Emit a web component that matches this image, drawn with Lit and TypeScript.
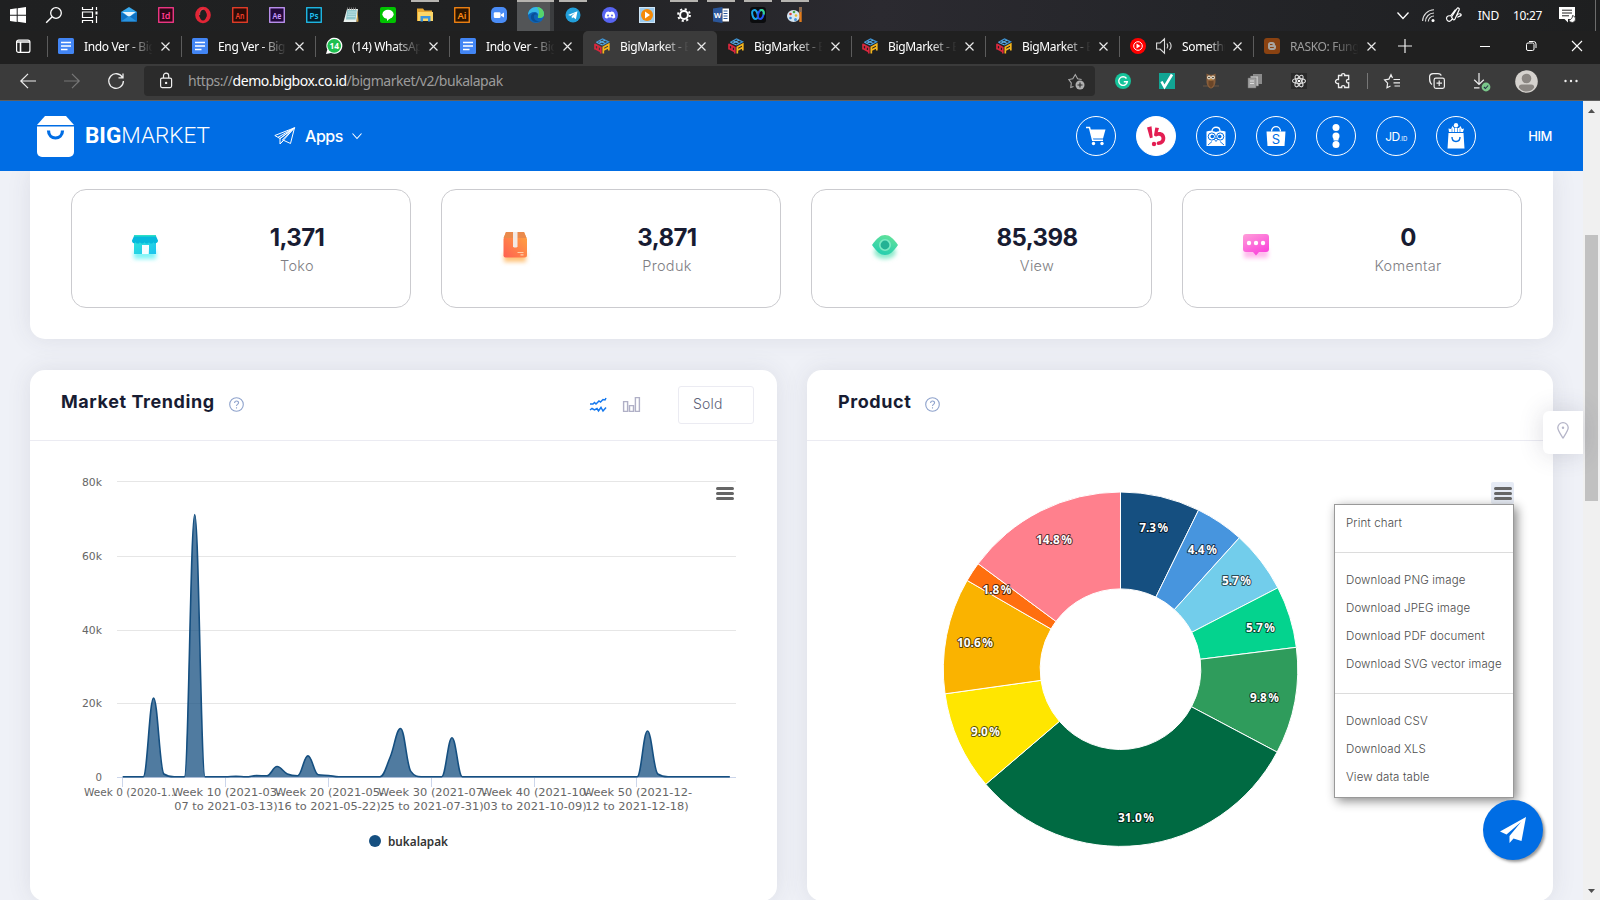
import { LitElement, html, svg, css, nothing } from "lit";
import { customElement } from "lit/decorators.js";
import { classMap } from "lit/directives/class-map.js";

const icon = (body: unknown, w = 16, h = w, vb = `0 0 ${w} ${h}`) =>
  html`<svg class="ic" width=${w} height=${h} viewBox=${vb} fill="none">${body}</svg>`;

const adobe = (t: string, fg: string, bg: string) =>
  icon(svg`<rect x=".75" y=".75" width="14.5" height="14.5" fill=${bg} stroke=${fg} stroke-width="1.3"/>
  <text x="8" y="11.6" text-anchor="middle" font-family="Noto Sans, sans-serif" font-size="9.5" textLength="9" lengthAdjust="spacingAndGlyphs" font-weight="600" fill=${fg}>${t}</text>`);

const docs = () => icon(svg`<rect width="16" height="16" rx="1.5" fill="#4285f4"/><path d="M3 4.5h10M3 8h10M3 11.5h6.5" stroke="#fff" stroke-width="1.7"/>`);
const bigbox = () => icon(svg`
  <path d="M2.500 4.200 8.500 1l6 2.800-6 3.200" stroke="#3f93d2" stroke-width="1.300"/><path d="M5.300 2.700l6 2.800M5 5.300l6-3.100M2.500 4.200l6 2.800" stroke="#5aaee6" stroke-width="1.200"/>
  <path d="M1 5.800v5.700M1 6.300l5.800 3.200v6M1 10.500l5.500 3M4 8v4.500" stroke="#d8273d" stroke-width="1.700"/>
  <path d="M9.300 15.500V9.300l5.500-3v6.200M9.300 12.300l5.200-2.800" stroke="#f5b51c" stroke-width="1.700"/>`);

const taskIcons: { g: unknown; line?: boolean; active?: boolean }[] = [
  { g: icon(svg`<path d="M0 5h16v9.500H0z" fill="#0f72c4"/><path d="M0 5 8 0l8 5-8 5z" fill="#38a9ee"/><path d="M1.500 5h13L8 10z" fill="#e8f4fc"/><path d="M0 14.500 8 9l8 5.500z" fill="#2a94e0"/>`) },
  { g: adobe("Id", "#ff3a8d", "#2a0716") },
  { g: icon(svg`<ellipse cx="8" cy="8" rx="5.800" ry="6.300" stroke="#e22536" stroke-width="4" /><ellipse cx="8" cy="8" rx="3.400" ry="5.600" fill="#202020"/><path d="M4.600 8c0-4 2-6 4-6" stroke="#ff7a80" stroke-width=".6"/>`) },
  { g: adobe("An", "#f2402a", "#2b0b07") },
  { g: adobe("Ae", "#c79bff", "#22083a") },
  { g: adobe("Ps", "#20c4f4", "#041e2b") },
  { g: icon(svg`<path d="M4 2h11l-1.500 13H.5z" fill="#e9f1ee"/><path d="M4.200 3h9.500l-1.100 9.500H3z" fill="#8fc7cc"/><path d="M5 5h8M4.700 7.200h8M4.400 9.400h8" stroke="#c9e8ea" stroke-width=".8"/><path d="M4 1.500h10" stroke="#777" stroke-width="2" stroke-dasharray="1 1"/><path d="m14.500 3 1 11.500-2 .5z" fill="#c9a04a"/>`) },
  { g: icon(svg`<rect width="16" height="16" rx="2" fill="#00c300"/><ellipse cx="8" cy="7.300" rx="5.600" ry="4.600" fill="#fff"/><path d="M7 11v3l4-3.500z" fill="#fff"/>`) },
  { g: icon(svg`<path d="M0 1.500h6l1.500 2H15V14H0z" fill="#e8a832"/><path d="M1 5h15v9H1z" fill="#fcd667"/><path d="M3.500 14.500V9h10v5.500H11v-3H6v3z" fill="#3b95dd"/>`), line: true },
  { g: adobe("Ai", "#ff8a12", "#2c1500") },
  { g: icon(svg`<rect width="16" height="16" rx="5" fill="#4a8cf6"/><rect x="2.800" y="5.300" width="6.700" height="5.600" rx="1.200" fill="#fff"/><path d="m10 7.400 3-1.800v5l-3-1.800z" fill="#fff"/>`) },
  { g: icon(svg`<circle cx="8" cy="8" r="8" fill="#0d66b8"/><path d="M0 8C0 3 4 0 8 0c5 0 8 3.500 8 7 0 3-2.500 4-4.500 4-1.500 0-2-.7-1.500-1.500C11 7 9 5 6.500 5 3 5 1 7 0 8z" fill="#37b8e6"/><path d="M9 .1c4.500.3 7 3.500 7 6.900 0 3-2.500 4-4.500 4-1.500 0-2-.7-1.500-1.500C12 6 11 3 9 .1z" fill="#57d46a"/><path d="M6.300 8c-1.500 3 1 7 6 6C7 17 2 13 3 9c.5-2 2-3 3.500-3 2 0 2.600 1 2.500 1.600-1 0-2-.6-2.700.4z" fill="#0a4f96"/>`), line: true, active: true },
  { g: icon(svg`<circle cx="8" cy="8" r="7.500" fill="#229fda"/><path d="m3 8 9.500-3.800-1.600 8-2.700-2-1.300 1.400-.3-2.400 3.600-3.400-4.600 3z" fill="#fff"/>`), line: true },
  { g: icon(svg`<circle cx="8" cy="8" r="8" fill="#5865f2"/><path d="M4 5.500c1-.8 2-1 2.700-1l.4.600h1.800l.4-.6c.8 0 1.700.2 2.700 1 .8 1.500 1.300 3 1.200 5-.8.600-1.700 1-2.500 1l-.6-1H5.900l-.6 1c-.8 0-1.700-.4-2.500-1-.1-2 .4-3.500 1.200-5z" fill="#fff"/><circle cx="6" cy="8.500" r="1" fill="#5865f2"/><circle cx="10" cy="8.500" r="1" fill="#5865f2"/>`) },
  { g: icon(svg`<rect x=".5" y=".5" width="15" height="15" fill="#9ccbee" stroke="#cfe6f7"/><circle cx="8" cy="8" r="6" fill="#f58a07"/><path d="m6 4.500 5 3.500-5 3.500z" fill="#fff"/>`) },
  { g: icon(svg`<circle cx="8" cy="8" r="3.900" stroke="#fff" stroke-width="2"/><circle cx="8" cy="8" r="5.900" stroke="#fff" stroke-width="2" stroke-dasharray="2.100 2.530"/>`), line: true },
  { g: icon(svg`<path d="M0 1.500 9.500 0v16L0 14.500z" fill="#2b569a"/><path d="M9.500 1.500H16v13H9.500z" fill="#fff"/><path d="M10.500 4h4M10.500 6.500h4M10.500 9h4M10.500 11.500h4" stroke="#2b569a"/><text x="4.700" y="11" text-anchor="middle" font-family="Noto Sans, sans-serif" font-weight="700" font-size="7.500" fill="#fff">W</text>`), line: true },
  { g: icon(svg`<rect width="16" height="16" rx="3" fill="#0b0c0e"/><ellipse cx="5" cy="7.500" rx="2.600" ry="4.500" transform="rotate(-15 5 7.500)" stroke="#1aa7e8" stroke-width="2"/><ellipse cx="10.800" cy="7.500" rx="2.600" ry="4.500" transform="rotate(15 10.800 7.500)" stroke="#2456f0" stroke-width="2"/><path d="M10 3.500c3-1.500 4.500 1 3.600 4" stroke="#35d88a" stroke-width="2"/>`), line: true },
  { g: icon(svg`<ellipse cx="6.500" cy="9" rx="6.500" ry="6" fill="#d7e7f3"/><circle cx="3.500" cy="7" r="1.300" fill="#d9453a"/><circle cx="7" cy="5" r="1.300" fill="#4da84a"/><circle cx="3.500" cy="11" r="1.300" fill="#3c86d8"/><circle cx="8.500" cy="12.500" r="1.500" fill="#4b95d6"/><circle cx="9" cy="8.500" r="1.300" fill="#e9bd2e"/><path d="M13.500 0v5" stroke="#8a6a52" stroke-width="3"/><path d="M13.500 5v10" stroke="#e27c1c" stroke-width="2.400"/>`), line: true },
];

interface Tab { title: string; icon: unknown; active?: boolean; dim?: boolean; sound?: boolean; noSep?: boolean }
const tabs: Tab[] = [
  { title: "Indo Ver - Big", icon: docs() },
  { title: "Eng Ver - Big", icon: docs() },
  { title: "(14) WhatsAp", icon: icon(svg`<path d="M0 16 1.300 11.500A8 8 0 1 1 5 15z" fill="#fff"/><circle cx="8.200" cy="7.800" r="6.900" fill="#1fbf4f"/><text x="8.200" y="11.300" text-anchor="middle" font-family="Noto Sans, sans-serif" font-weight="700" font-size="9" textLength="9.500" lengthAdjust="spacingAndGlyphs" fill="#fff">14</text>`) },
  { title: "Indo Ver - Big", icon: docs() },
  { title: "BigMarket - B", icon: bigbox(), active: true, noSep: true },
  { title: "BigMarket - B", icon: bigbox(), noSep: true },
  { title: "BigMarket - B", icon: bigbox() },
  { title: "BigMarket - B", icon: bigbox() },
  { title: "Somethi", sound: true, icon: icon(svg`<circle cx="8" cy="8" r="8" fill="#f00"/><circle cx="8" cy="8" r="4.300" stroke="#fff" stroke-width="1"/><path d="m6.500 5.500 4 2.500-4 2.500z" fill="#fff"/>`) },
  { title: "RASKO: Fung", dim: true, icon: icon(svg`<rect width="16" height="16" rx="3" fill="#8a4211"/><path d="M4 6.500C4 5 5 4 6.500 4h2C10 4 11 5 11 6.500c0 .6.200 1 1 1v2c0 1.500-1 2.500-2.500 2.500h-3C5 12 4 11 4 9.500z" fill="#a8a39e"/><path d="M6 6.500h2.500M6 9.500h3.800" stroke="#8a4211" stroke-width="1.100"/>`) },
];

const stats = [
  { value: "1,371", label: "Toko", icon: icon(svg`
    <g filter="url(#b1)"><rect x="5" y="20" width="22" height="8" fill="#7ff4f6"/></g>
    <defs><filter id="b1" x="-50%" y="-100%" width="200%" height="300%"><feGaussianBlur stdDeviation="2"/></filter><linearGradient id="g1" x2="1" y2="1"><stop stop-color="#31e8d8"/><stop offset="1" stop-color="#1cc2f0"/></linearGradient></defs>
    <path d="M5 6h22v17h-7v-9h-7v9H5z" fill="url(#g1)"/><path d="M13 14h6.500v9H13z" fill="#f5fcff"/>
    <path d="M5.500 4h21l2.500 5.500c0 3.400-4 3.400-4.500 1.500-.6 2-4 2-4.500 0-.6 2-4 2-4.500 0-.6 2-4 2-4.500 0-.6 2-4 2-4.500 0-.5 1.900-3.500 1.900-3.500-1.500z" fill="#06b9dc"/><path d="M5.500 4h21l.7 1.500H4.800z" fill="#2bdfc7"/>`, 32, 36) },
  { value: "3,871", label: "Produk", icon: icon(svg`
    <defs><filter id="b2" x="-50%" y="-100%" width="200%" height="300%"><feGaussianBlur stdDeviation="2"/></filter><linearGradient id="g2" x1="1" x2="0" y2="1"><stop stop-color="#ffa840"/><stop offset="1" stop-color="#ff5f52"/></linearGradient></defs>
    <rect x="5" y="22" width="22" height="9" fill="#ffc37a" filter="url(#b2)"/>
    <path d="M4.500 8 7 1h18l3 7v16a2.500 2.500 0 0 1-2.500 2.500h-19a2 2 0 0 1-2-2z" fill="url(#g2)"/><path d="M7 1h18l2.500 6h-23z" fill="#ea8a4c"/>
    <path d="M14 1h4.500v14.500l-1 1h-2.500l-1-1z" fill="#f3e9e4"/><path d="M18.500 21.500h6M21.500 23.800h3" stroke="#ffd0a8" stroke-width="1.200"/>`, 32, 36) },
  { value: "85,398", label: "View", icon: icon(svg`
    <defs><filter id="b3" x="-50%" y="-100%" width="200%" height="300%"><feGaussianBlur stdDeviation="2"/></filter><linearGradient id="g3" x1=".7" x2=".3" y2="1"><stop stop-color="#63e29a"/><stop offset="1" stop-color="#22cdb0"/></linearGradient></defs>
    <ellipse cx="16" cy="21" rx="11" ry="7" fill="#8ceacb" filter="url(#b3)"/>
    <path d="M3 14C8 7 11.500 4 16 4s8 3 13 10c-5 7-8.500 10-13 10S8 21 3 14z" fill="url(#g3)"/><circle cx="16" cy="14" r="5.200" fill="#24b294" stroke="#7debc4" stroke-width="1.600"/>`, 32, 36) },
  { value: "0", label: "Komentar", icon: icon(svg`
    <defs><filter id="b4" x="-50%" y="-100%" width="200%" height="300%"><feGaussianBlur stdDeviation="2"/></filter><linearGradient id="g4" x2=".6" y2="1"><stop stop-color="#ff9fd8"/><stop offset="1" stop-color="#fb45dc"/></linearGradient></defs>
    <rect x="4" y="18" width="24" height="9" fill="#ffb9ec" filter="url(#b4)"/>
    <path d="M6 3h20a3 3 0 0 1 3 3v12a3 3 0 0 1-3 3h-7l-3 3.500L13 21H6a3 3 0 0 1-3-3V6a3 3 0 0 1 3-3z" fill="url(#g4)"/><circle cx="9" cy="12" r="2.200" fill="#fff"/><circle cx="16" cy="12" r="2.200" fill="#fff"/><circle cx="23" cy="12" r="2.200" fill="#fff"/>`, 32, 36) },
];

/* Weekly sales, one value per week. */
const weekly: number[] = Array.from({ length: 60 }, () => 0.15);
Object.entries({ 3: 21.4, 4: 0.9, 7: 71, 11: 0.25, 13: 0.45, 14: 0.4, 15: 2.9, 16: 0.9, 17: 0.4, 18: 5.8, 19: 0.7, 20: 0.5, 26: 5.5, 27: 13.2, 28: 1.6, 32: 10.7, 51: 12.5, 52: 0.9 })
  .forEach(([k, v]) => (weekly[+k] = v));
const PX = (i: number) => 122.7 + i * 10.29;
const PY = (v: number) => 777.3 - v * 3.7;

const splinePath = () => {
  const p = weekly.map((v, i) => ({ x: PX(i), y: PY(v), rx: 0, ry: 0 }));
  let d = `M${p[0].x} ${p[0].y}`;
  for (let i = 1; i < p.length; i++) {
    const last = p[i - 1], pt = p[i], next = p[i + 1];
    let lx = pt.x, ly = pt.y;
    if (next) {
      lx = (1.5 * pt.x + last.x) / 2.5;
      ly = (1.5 * pt.y + last.y) / 2.5;
      let rx = (1.5 * pt.x + next.x) / 2.5;
      let ry = (1.5 * pt.y + next.y) / 2.5;
      const c = rx !== lx ? ((ry - ly) * (rx - pt.x)) / (rx - lx) + pt.y - ry : 0;
      ly += c;
      ry += c;
      if (ly > last.y && ly > pt.y) { ly = Math.max(last.y, pt.y); ry = 2 * pt.y - ly; }
      else if (ly < last.y && ly < pt.y) { ly = Math.min(last.y, pt.y); ry = 2 * pt.y - ly; }
      if (ry > next.y && ry > pt.y) { ry = Math.max(next.y, pt.y); ly = 2 * pt.y - ry; }
      else if (ry < next.y && ry < pt.y) { ry = Math.min(next.y, pt.y); ly = 2 * pt.y - ry; }
      pt.rx = rx;
      pt.ry = ry;
    }
    const cx = i === 1 ? last.x : last.rx, cy = i === 1 ? last.y : last.ry;
    d += `C${cx} ${cy} ${lx} ${ly} ${pt.x} ${pt.y}`;
  }
  return d;
};

const xLabels = [
  { x: 225.500, a: "Week 10 (2021-03-", b: "07 to 2021-03-13)" },
  { x: 328.500, a: "Week 20 (2021-05-", b: "16 to 2021-05-22)" },
  { x: 431.500, a: "Week 30 (2021-07-", b: "25 to 2021-07-31)" },
  { x: 534.500, a: "Week 40 (2021-10-", b: "03 to 2021-10-09)" },
  { x: 636.500, a: "Week 50 (2021-12-", b: "12 to 2021-12-18)" },
];

const slices = [
  { to: 7.26, c: "#154f80", t: "7.3 %", x: 1153.7, y: 528.3 },
  { to: 11.7, c: "#4795de", t: "4.4 %", x: 1202.3, y: 550.3 },
  { to: 17.4, c: "#72cdeb", t: "5.7 %", x: 1236.5, y: 581.2 },
  { to: 23.03, c: "#04d38e", t: "5.7 %", x: 1260.5, y: 628.3 },
  { to: 32.75, c: "#2f9c5c", t: "9.8 %", x: 1264.5, y: 698.3 },
  { to: 63.75, c: "#006a42", t: "31.0 %", x: 1136, y: 818.3 },
  { to: 72.78, c: "#ffe600", t: "9.0 %", x: 985.5, y: 732.3 },
  { to: 83.35, c: "#fab300", t: "10.6 %", x: 975, y: 643.3 },
  { to: 85.15, c: "#ff6f0f", t: "1.8 %", x: 997, y: 590.3 },
  { to: 100, c: "#ff808d", t: "14.8 %", x: 1054, y: 540.3 },
];
const CX = 1120.5, CY = 669.2, RO = 177.200, RI = 80.300;
const polar = (r: number, f: number) => `${CX + r * Math.sin((f * Math.PI) / 50)} ${CY - r * Math.cos((f * Math.PI) / 50)}`;
const slicePath = (a: number, b: number) =>
  `M${polar(RO, a)}A${RO} ${RO} 0 0 1 ${polar(RO, b - 0.001)}L${polar(RI, b - 0.001)}A${RI} ${RI} 0 0 0 ${polar(RI, a)}Z`;

const menuGroups = [
  ["Print chart"],
  ["Download PNG image", "Download JPEG image", "Download PDF document", "Download SVG vector image"],
  ["Download CSV", "Download XLS", "View data table"],
];

const W = "#fff";
const markets = [
  { g: icon(svg`<path d="M4 3.500h15.500l-2.500 9H6.500z" fill=${W}/><path d="M0 1.500h3.500l3.200 12.700H17" stroke=${W} stroke-width="1.500"/><circle cx="7.500" cy="17.500" r="1.700" fill=${W}/><circle cx="16" cy="17.500" r="1.700" fill=${W}/>`, 20) },
  { g: icon(svg`<path d="M1 1.500 5.500.2l1.200 11.300-2.700.8z" fill="#e31e52"/><circle cx="8" cy="18" r="2.200" fill="#e31e52"/><path d="M9.300 1.500 13 2l-1.300 4.200c4-.8 7.300 1.300 7.600 5.600.2 4.200-2.800 7.200-6.800 7.200-1.300 0-2-1-1.800-2 .2-1.200 1-1.600 2.200-1.700 1.700-.2 2.700-1.300 2.600-3-.1-2.200-2-3.200-4-2.200-1.200.6-3.200.5-3.500-1.100z" fill="#e31e52"/>`, 20), on: true },
  { g: icon(svg`<path d="M6 5c0-5 8-5 8 0" stroke=${W} stroke-width="1.300"/><path d="M.5 5.500c4-1.500 6-.5 9.500.5 3.500-1 5.500-2 9.500-.5V20H.5z" fill=${W}/><circle cx="5.800" cy="10.500" r="3.600" stroke="#006de4"/><circle cx="14.200" cy="10.500" r="3.600" stroke="#006de4"/><circle cx="6.300" cy="10.500" r="1.800" fill="#006de4"/><circle cx="13.700" cy="10.500" r="1.800" fill="#006de4"/><path d="m8.500 13.500 1.500-1.500 1.500 1.500-1.500 2zM2 19l4-3.500M18 19l-4-3.500" stroke="#006de4" stroke-width=".9"/>`, 20, 21) },
  { g: icon(svg`<path d="M5.500 5.500c0-6.500 9-6.500 9 0" stroke=${W} stroke-width="1.300"/><path d="M.5 5.500h19L18.500 20h-17z" fill=${W}/><text x="10" y="17.500" text-anchor="middle" font-family="Inter, sans-serif" font-size="13" fill="#006de4">S</text>`, 20, 21) },
  { g: icon(svg`<circle cx="5" cy="3.500" r="3.500" fill=${W}/><circle cx="5" cy="12" r="3.500" fill=${W}/><circle cx="5" cy="20.500" r="3.500" fill=${W}/><path d="M2.500 15.500h5" stroke=${W} stroke-width="2"/>`, 10, 24) },
  { g: html`<span class="jd">JD<small>.ID</small></span>` },
  { g: icon(svg`<path d="M2 9 1.500 5.500 4 6l1.500-3 1.500 2h5l1.500-2L15 6l2-.5L16 9z" fill=${W}/><circle cx="9" cy="2.200" r="2.200" fill=${W}/><path d="M1.500 10h15l1 15.500H.500z" fill=${W}/><path d="M5 14c0 6 8 6 8 0" stroke="#006de4" stroke-width="1.400"/><path d="M5 5.500v3.500M7.500 5v4M10.500 5v4M13 5.500v3.500" stroke="#006de4" stroke-width=".6"/>`, 18, 26) },
];

const burger = (x: number) => svg`<path d=${`M${x} 488.500h15M${x} 493.500h15M${x} 498.500h15`} stroke="#666" stroke-width="3" stroke-linecap="round"/>`;
const help = () => icon(svg`<circle cx="7.500" cy="7.500" r="6.800" stroke="#8fa3cc" stroke-width="1.100"/><path d="M5.600 6c0-2.600 4-2.600 4-.2 0 1.600-2.100 1.500-2.100 3.100M7.500 10.300v1.100" stroke="#8fa3cc" stroke-width="1.100"/>`, 15);

@customElement("app-root")
export class AppRoot extends LitElement {
  static styles = css`
    :host { display: flex; flex-direction: column; width: 1600px; height: 900px; overflow: hidden; position: relative;
      font-family: Inter, "Open Sans", sans-serif; color: #181c32; background: #eff1f7; }
    * { box-sizing: border-box; }
    .ic { display: block; flex: none; overflow: visible; }
    .chrome { font-family: "Noto Sans", "Open Sans", sans-serif; color: #fff; flex: none; }
    .taskbar { display: flex; height: 31px; background: linear-gradient(90deg, #1f2021, #202122 30%, #2b2a30 55%, #242529 75%, #1e1f20); }
    .cell { width: 37px; height: 31px; display: flex; align-items: center; justify-content: center; padding-bottom: 1px; }
    .cell.sys { width: 36px; }
    .cell.first { margin-left: 2px; }
    .cell.line { background: linear-gradient(#b6b4b0, #b6b4b0) center top / 28px 2px no-repeat; }
    .cell.active { background: linear-gradient(#b6b4b0, #b6b4b0) left top / 37px 2px no-repeat, linear-gradient(90deg, #535557 0 33px, #3b3d3f 33px); }
    .tray { margin-left: auto; display: flex; align-items: center; font-size: 12px; padding-bottom: 1px; }
    .tray span { letter-spacing: -.35px; }
    .tray .t1 { margin: 0 14px 0 16px; letter-spacing: -.2px; } .t2 { margin-right: 17px; }
    .tray .pen { margin-left: 11px; } .tray .wifi { margin-left: 13px; }
    .deskline { width: 1px; height: 31px; background: #6c6c6c; margin: 0 4px 0 20px; }
    .tabs { display: flex; height: 33px; background: #202020; align-items: stretch; }
    .side { width: 47px; display: flex; align-items: center; padding: 0 0 3px 16px; }
    .tab { width: 134px; display: flex; align-items: center; padding: 0 0 3px 11px; font-size: 12px; }
    .tab::before { content: ""; width: 1px; height: 21px; background: #5c5c5c; margin-left: -11px; margin-right: 10px; }
    .tab.nosep::before { background: none; }
    .tab.active { background: #3b3b3b; border-radius: 5px 5px 0 0; }
    .title { margin-left: 10px; width: 70px; overflow: hidden; white-space: nowrap; letter-spacing: -.35px;
      -webkit-mask-image: linear-gradient(90deg, #000 60%, transparent 98%); mask-image: linear-gradient(90deg, #000 60%, transparent 98%); }
    .sound .title { width: 44px; margin-left: 10px; }
    .sound .spk { margin-left: 10px; }
    .dim .title { color: #9d9d9d; }
    .x { margin-left: 7px; }
    .side.plus { margin: 0; padding-left: 11px; }
    .wins { margin-left: auto; display: flex; gap: 36px; padding: 0 18px 3px 0; align-items: center; }
    .tools { display: flex; height: 37px; background: #3b3b3b; border-bottom: 1px solid #5e5e5e; align-items: flex-start; padding: 2px 0 0 20px; }
    .nav { display: flex; gap: 28px; height: 30px; align-items: center; width: 124px; }
    .addr { width: 951px; height: 30px; background: #2b2b2b; border-radius: 4px; display: flex; align-items: center; padding: 0 11px 0 14px; }
    .url { margin-left: 14px; font-size: 14px; color: #9b9b9b; letter-spacing: -.46px; margin-top: -1px; }
    .url b { font-weight: 400; color: #fff; }
    .addr .star { margin-left: auto; }
    .exts { display: flex; height: 30px; align-items: center; padding-left: 6px; }
    .ext { width: 44px; display: flex; justify-content: center; flex: none; }
    .ext.wide { width: 44.700px; }
    .sep { width: 1px; height: 16px; background: #777; margin: 0 2px; }
    .view { flex: 1; display: flex; min-height: 0; position: relative; }
    .page { width: 1583px; display: flex; flex-direction: column; overflow: hidden; }
    .header { height: 70px; flex: none; background: #006de4; color: #fff; display: flex; align-items: center; padding: 0 31px 0 37px; z-index: 2; }
    .brand { font: 700 22.500px Roboto, sans-serif; margin-left: 11px; width: 127px; margin-top: -2px; letter-spacing: 0; white-space: nowrap; }
    .brand span { font-weight: 300; }
    .apps { display: flex; align-items: center; margin-left: 62px; font-size: 16px; font-weight: 500; letter-spacing: -.45px; gap: 10px; }
    .apps .ic:last-child { margin-left: -1px; }
    .markets { margin-left: auto; display: flex; gap: 20px; }
    .mk { width: 40px; height: 40px; border: 1px solid #fff; border-radius: 50%; display: flex; align-items: center; justify-content: center; }
    .mk.on { background: #fff; }
    .jd { font-size: 12px; font-weight: 400; letter-spacing: -.6px; } .jd small { font-size: 6px; letter-spacing: 0; }
    .him { font-size: 13px; font-weight: 500; margin-left: 52px; letter-spacing: -.45px; }
    .content { padding: 0 30px; display: flex; flex-direction: column; gap: 31px; }
    .card { background: #fff; box-shadow: 0 0 25px rgba(60, 60, 80, .1); }
    .summary { height: 168px; border-radius: 0 0 15px 15px; padding: 18px 0 0 41px; display: grid; grid-template-columns: 340px 340px 341px 340px; gap: 30px; }
    .stat { height: 119px; border: 1px solid #cbcbcf; border-radius: 15px; display: flex; }
    .pic { width: 146px; display: flex; align-items: center; justify-content: center; }
    .num { width: 158px; text-align: center; padding-top: 33px; }
    .num b { display: block; font-size: 24px; line-height: 29px; font-weight: 700; letter-spacing: -.6px; }
    .num i { display: block; font-style: normal; font-size: 14.500px; line-height: 20px; margin-top: 4px; color: #7e7e83; font-weight: 300; letter-spacing: .3px; }
    .row { display: flex; gap: 30px; }
    .chart { width: 747px; height: 531px; border-radius: 15px; flex: none; }
    .chart:last-child { width: 746px; }
    .head { height: 71px; border-bottom: 1px solid #ebebf2; display: flex; align-items: center; padding: 0 23px 0 31px; }
    .head h2 { margin: -7px 14px 0 0; font-size: 18px; font-weight: 650; letter-spacing: .57px; }
    .head h2 + .ic { margin-top: -2px; }
    .head .trend { margin-left: auto; margin-top: -1px; } .head .bars { margin-left: 17px; margin-top: -1px; }
    .sel { margin-left: 38px; width: 76px; height: 38px; border: 1px solid #ebebf2; border-radius: 3px; font-size: 14px; font-weight: 300; color: #5e6278; padding-left: 14px; line-height: 33px; letter-spacing: .2px; }
    .plot { display: block; }
    .sb { width: 17px; background: #f0f0f0; display: flex; flex-direction: column; align-items: center; justify-content: space-between; padding: 8px 0 7px; position: relative; }
    .thumb { position: absolute; left: 2px; top: 134px; width: 13px; height: 266px; background: #c1c1c1; }
    .pin { position: absolute; right: 17px; top: 310px; width: 40px; height: 43px; background: #fff; border-radius: 6px 0 0 6px; box-shadow: 0 0 25px rgba(60, 60, 90, .18); display: flex; align-items: center; justify-content: center; z-index: 2; padding-bottom: 4px; }
    .menu { position: absolute; left: 1334px; top: 403px; width: 180px; height: 294px; background: #fff; border: 1px solid #999; box-shadow: 3px 3px 10px #888; font-size: 11.500px; font-weight: 300; color: #4c4c4c; padding: 5px 0; z-index: 1; }
    .item { height: 28px; line-height: 26px; padding-left: 11px; white-space: nowrap; letter-spacing: .11px; }
    .menu hr { border: 0; height: 1px; background: #dcdcdc; margin: 14px 0; }
    .fab { position: absolute; left: 1483px; top: 699px; width: 60px; height: 60px; border-radius: 50%; background: #006de4; box-shadow: 2px 2px 3px #999; display: flex; align-items: center; justify-content: center; z-index: 3; }
  `;

  private close(c = "#e8e8e8") {
    return html`<span class="x">${icon(svg`<path d="m.5.5 8 8m0-8-8 8" stroke=${c} stroke-width="1.200"/>`, 9)}</span>`;
  }

  private taskbar() {
    return html`<div class="taskbar">
      <div class="cell sys">${icon(svg`<path d="M0 2.200 6.700 1.300v6.400H0zM7.700 1.200 16 0v7.700H7.700zM0 8.700h6.700v6.200L0 14zM7.700 8.700H16V16l-8.300-1.200z" fill="#fff"/>`)}</div>
      <div class="cell sys">${icon(svg`<circle cx="10" cy="6" r="5.300" stroke="#fff" stroke-width="1.300"/><path d="m6.200 9.800-6 6" stroke="#fff" stroke-width="1.400"/>`)}</div>
      <div class="cell sys">${icon(svg`<path d="M.5 0v2.500h10V0M.5 16v-2.500h10V16M.5 5h10v5.500H.5zM14.500 0v3M14.500 9v7" stroke="#fff" stroke-width="1.200"/><path d="M13.500 4.500h2v3h-2z" fill="#fff"/>`)}</div>
      ${taskIcons.map((t, i) => html`<div class=${classMap({ cell: true, first: i === 0, line: !!t.line, active: !!t.active })}>${t.g}</div>`)}
      <div class="tray">
        ${icon(svg`<path d="m.5.5 5.500 6 5.500-6" stroke="#fff" stroke-width="1.300"/>`, 12, 7)}
        <span class="wifi">${icon(svg`<path d="M.6 12A11.500 11.500 0 0 1 12 .8M3.500 12.500A8.500 8.500 0 0 1 12 4M6.300 12.500A5.700 5.700 0 0 1 12 7" stroke="#ddd" stroke-width="1.100"/><circle cx="11" cy="11.500" r="1.500" fill="#fff"/>`, 13)}</span>
        <span class="pen">${icon(svg`<path d="M5.500 10 11 1.500c.8-1.200 2.800-.2 2.200 1.200L9 12c-.5 1-1.500 1-2 .3zM9.500 2.500l-5 6.500M5 9c-3.500-1-5.500 1.500-4 4 1 1.700 3.500 2.500 5-1M11 8.500c2-3 5-1.500 4 0-1 1.200-2.500.5-3.500 2" stroke="#fff" stroke-width="1.200"/>`)}</span>
        <span class="t1">IND</span><span class="t2">10:27</span>
        ${icon(svg`<path d="M0 0h16v12H9v3.500L5.500 12H0z" fill="#fff"/><path d="M3 3.200h10M3 6h10M3 8.800h7" stroke="#222"/><path d="M13.500 8.500a3.500 3.500 0 1 1-3.800 4.500 4 4 0 0 0 3.800-4.500z" fill="#fff" stroke="#222" stroke-width=".8"/>`)}
        <div class="deskline"></div>
      </div>
    </div>`;
  }

  private tabbar() {
    return html`<div class="tabs">
      <div class="side">${icon(svg`<rect x=".6" y="1.100" width="13.300" height="12.300" rx="2" stroke="#fff" stroke-width="1.200"/><path d="M.6 3h13.300M4.500 3v10.500" stroke="#fff" stroke-width="1.600"/>`, 15)}</div>
      ${tabs.map((t) => html`<div class=${classMap({ tab: true, active: !!t.active, dim: !!t.dim, sound: !!t.sound, nosep: !!t.noSep })}>
        ${t.icon}${t.sound ? html`<span class="spk">${icon(svg`<path d="M.6 5h3.500L8.500.8v14.400L4.100 11H.6zM11 5.500c1 1.500 1 3.500 0 5M13.500 4c2 2.500 2 5.500 0 8" stroke="#ddd" stroke-width="1.100"/>`)}</span>` : nothing}
        <div class="title">${t.title}</div>${this.close()}</div>`)}
      <div class="side plus">${icon(svg`<path d="M7 0v14M0 7h14" stroke="#eee" stroke-width="1.200"/>`, 14)}</div>
      <div class="wins">
        ${icon(svg`<path d="M0 5.500h10" stroke="#fff"/>`, 10)}
        ${icon(svg`<rect x=".5" y="2" width="7.500" height="7.500" rx="1.500" stroke="#fff"/><path d="M3 .5h4.500q2.500 0 2.500 2.500V7" stroke="#fff"/>`, 10)}
        ${icon(svg`<path d="m0 0 10 10M10 0 0 10" stroke="#fff" stroke-width="1.100"/>`, 10)}
      </div>
    </div>`;
  }

  private toolbar() {
    const s = "#eee";
    const left = [
      icon(svg`<circle cx="8" cy="8" r="8" fill="#15c39a"/><path d="M11.500 5.500A4.300 4.300 0 1 0 12.300 8.800H8.800" stroke="#fff" stroke-width="1.400"/>`),
      icon(svg`<path d="M0 0h16v16H0z" fill="#12a594"/><path d="m2.500 8.500 3 5.500L13 1.500" stroke="#fff" stroke-width="2.600"/>`),
      icon(svg`<path d="M0 13h16" stroke="#6b5744" stroke-width="1"/><path d="M3.500.5 6 1.700h4L12.500.5v7.500c0 4-2 7-4.500 7.500-2.500-.5-4.500-3.500-4.500-7.500z" fill="#8a5f3b"/><path d="M5.500 8h5v4l-2.500 3-2.500-3z" fill="#6b4628"/><circle cx="6" cy="4.500" r="1.900" fill="#e9dec8"/><circle cx="10" cy="4.500" r="1.900" fill="#e9dec8"/><path d="m7.200 6 .8 1.800.8-1.800z" fill="#e49b27"/><circle cx="6" cy="4.500" r=".8" fill="#222"/><circle cx="10" cy="4.500" r=".8" fill="#222"/>`),
      icon(svg`<path d="M6 1h9v10H6z" fill="#8b8b8b"/><path d="M3.500 3h8v10h-8z" fill="#bdbdbd" stroke="#777" stroke-width=".5"/><path d="M1 5h8v10H1z" fill="#a3a3a3" stroke="#6d6d6d" stroke-width=".5"/><path d="M3 8h4M3 10.500h4" stroke="#ddd"/>`),
      icon(svg`<path d="M0 0h16v16H0z" fill="#2a2a2a"/><ellipse cx="8" cy="8" rx="6.500" ry="2.500" stroke="#ddd" stroke-width="1.100"/><ellipse cx="8" cy="8" rx="6.500" ry="2.500" transform="rotate(60 8 8)" stroke="#ddd" stroke-width="1.100"/><ellipse cx="8" cy="8" rx="6.500" ry="2.500" transform="rotate(120 8 8)" stroke="#ddd" stroke-width="1.100"/><circle cx="8" cy="8" r="1.300" fill="#fff"/>`),
      icon(svg`<path d="M3.500 2.500h3.200c-.8-2.600 3.800-2.600 3 0h4v4c-3-.8-3 4 0 3.200v4.800h-4c.8-2.600-3.800-2.600-3 0H3.500v-4c-4 .8-4-4.800 0-4z" stroke=${s} stroke-width="1.300"/>`),
    ];
    const right = [
      icon(svg`<path d="m6.500 13-3.500 1.800.6-4.600L.6 6.800l4.300-.7L7 1.700l1.500 3.200M9.500 6.500H16M9.500 9.800H16M10.500 13H16" stroke=${s} stroke-width="1.200"/>`),
      icon(svg`<rect x="5.100" y="5.100" width="10.300" height="10.300" rx="1.800" stroke=${s} stroke-width="1.200"/><path d="M10.200 7.500v5.500M7.500 10.200H13M3 11.500C.6 10 .5 8 .6 3.500.7 1.500 2 .8 4 .7h5c2 0 3 .8 3.200 2" stroke=${s} stroke-width="1.200"/>`),
      icon(svg`<path d="M5 0v11.500M.2 6.800 5 11.500l4.800-4.700M0 14.800h5.500" stroke=${s} stroke-width="1.200"/><circle cx="12" cy="14" r="4.400" fill="#7bc88b"/><path d="m9.900 14 1.500 1.500 2.700-3" stroke="#234" stroke-width="1.100"/>`),
      icon(svg`<circle cx="11.500" cy="11.500" r="11.300" fill="#d5d2ce"/><circle cx="11.500" cy="8.500" r="4.800" fill="#8b8783"/><path d="M3.800 17.500c0-2 1-3 3-3h9.400c2 0 3 1 3 3-2 3-5 4-7.700 4s-5.700-1-7.700-4z" fill="#8b8783"/>`, 23),
      icon(svg`<circle cx="2.500" cy="8" r="1.200" fill=${s}/><circle cx="8" cy="8" r="1.200" fill=${s}/><circle cx="13.500" cy="8" r="1.200" fill=${s}/>`),
    ];
    return html`<div class="tools">
      <div class="nav">
        ${icon(svg`<path d="M16 8H.8M8 .8.8 8 8 15.200" stroke=${s} stroke-width="1.200"/>`)}
        ${icon(svg`<path d="M0 8h15.200M8 .8 15.200 8 8 15.200" stroke="#777" stroke-width="1.200"/>`)}
        ${icon(svg`<path d="M14.500 4.500A7.300 7.300 0 1 0 15.400 8M15 .5v4.300h-4.500" stroke=${s} stroke-width="1.300"/>`)}
      </div>
      <div class="addr">
        <span>${icon(svg`<rect x="2.600" y="5.100" width="11" height="9.500" rx="1.500" stroke=${s} stroke-width="1.200"/><path d="M5.500 5V2.700a2.600 2.600 0 0 1 5.200 0V5" stroke=${s} stroke-width="1.200"/><circle cx="8.100" cy="9.900" r="1.200" fill=${s}/>`)}</span>
        <span class="url">https://<b>demo.bigbox.co.id</b>/bigmarket/v2/bukalapak</span>
        <span class="star">${icon(svg`<path d="m5.500 13.500-2.700 1 .5-4.500L.8 6.500l4-.8L7.300 1.500 9.600 5.700l4 .8" stroke="#aaa" stroke-width="1.100"/><circle cx="12" cy="12" r="4.500" fill="#b0b0b0"/><path d="M12 9.500v5M9.500 12h5" stroke="#2b2b2b" stroke-width="1.100"/>`)}</span>
      </div>
      <div class="exts">
        ${left.map((g) => html`<div class="ext">${g}</div>`)}
        <div class="sep"></div>
        ${right.map((g) => html`<div class="ext wide">${g}</div>`)}
      </div>
    </div>`;
  }

  private header() {
    return html`<div class="header">
      ${icon(svg`<path d="M8 0h21l8 9H0z" fill="#fff"/><path d="M0 10.500h37V36a5 5 0 0 1-5 5H5a5 5 0 0 1-5-5z" fill="#fff"/><path d="M11.500 14.500c0 10 14 10 14 0" stroke="#006de4" stroke-width="3.200"/>`, 37, 41)}
      <div class="brand">BIG<span>MARKET</span></div>
      <div class="apps">
        ${icon(svg`<path d="M20.500.8.800 8.500 6 11.500zM20.500.8 6 11.500v5.500zM20.500.8 8.500 12.800l8 3.700zM6 17l3.500-3.500M4 10.300 20 1" stroke="#fff" stroke-width="1"/>`, 21, 18)}
        <span>Apps</span>${icon(svg`<path d="m.5.500 4.500 5 4.500-5" stroke="#fff" stroke-width="1.100"/>`, 10, 6)}
      </div>
      <div class="markets">${markets.map((m) => html`<div class=${classMap({ mk: true, on: !!m.on })}>${m.g}</div>`)}</div>
      <div class="him">HIM</div>
    </div>`;
  }

  private trendPlot() {
    const line = splinePath();
    const f = "DejaVu Sans, sans-serif";
    const t = (x: number, y: number, s: string, len: number, anchor = "middle") =>
      svg`<text x=${x} y=${y} font-size="11" font-family=${f} fill="#666" text-anchor=${anchor} textLength=${len} lengthAdjust="spacingAndGlyphs">${s}</text>`;
    return html`<svg class="plot" width="747" height="459" viewBox="30 441 747 459" fill="none">
      ${[481.5, 556.5, 630.5, 703.5].map((y) => svg`<path d=${`M117 ${y}h619`} stroke="#e6e6e6"/>`)}
      ${["80k", "60k", "40k", "20k"].map((s, i) => t(102, [486, 560, 634, 707][i], s, 20, "end"))}
      ${t(102, 781, "0", 6.5, "end")}
      <path d="M117 777.500h619" stroke="#ccd6eb"/>
      ${[122.5, 225.5, 328.5, 431.5, 534.5, 636.5].map((x) => svg`<path d=${`M${x} 777v10`} stroke="#ccd6eb"/>`)}
      <path d=${`${line}L${PX(59)} 777.300L${PX(0)} 777.300Z`} fill="#154f80" fill-opacity=".75"/>
      <path d=${line} stroke="#154f80" stroke-width="1.600" stroke-linejoin="round"/>
      ${t(84, 796, "Week 0 (2020-1…", 94, "start")}
      ${xLabels.map((l) => [t(l.x + 1, 796, l.a, 109), t(l.x + 0.5, 810, l.b, 103.500)])}
      <circle cx="375" cy="841" r="6" fill="#154f80"/>
      <text x="388" y="846" font-size="12" font-family=${"Noto Sans, sans-serif"} font-weight="600" fill="#333" textLength="60" lengthAdjust="spacingAndGlyphs">bukalapak</text>
      ${burger(717.500)}
    </svg>`;
  }

  private donutPlot() {
    return html`<svg class="plot" width="746" height="459" viewBox="807 441 746 459" fill="none">
      ${slices.map((s, i) => svg`<path d=${slicePath(i ? slices[i - 1].to : 0, s.to)} fill=${s.c} stroke="#fff" stroke-linejoin="round"/>`)}
      ${slices.map((s) => svg`<text x=${s.x} y=${s.y + 4} text-anchor="middle" font-size="11.500" font-weight="700" font-family="Noto Sans, sans-serif" word-spacing="-1.500"
        textLength=${s.t.length > 5 ? 36 : 29} lengthAdjust="spacingAndGlyphs" fill="#fff" stroke="#000" stroke-opacity=".65" stroke-width="2" stroke-linejoin="round" paint-order="stroke">${s.t}</text>`)}
      <rect x="1491" y="482" width="23" height="22" rx="2" fill="#e6ebf5"/>
      ${burger(1495.500)}
    </svg>`;
  }

  render() {
    return html`
      <div class="chrome">${this.taskbar()}${this.tabbar()}${this.toolbar()}</div>
      <div class="view">
        <div class="page">
          ${this.header()}
          <div class="content">
            <div class="card summary">
              ${stats.map((s) => html`<div class="stat"><div class="pic">${s.icon}</div><div class="num"><b>${s.value}</b><i>${s.label}</i></div></div>`)}
            </div>
            <div class="row">
              <div class="card chart">
                <div class="head"><h2>Market Trending</h2>${help()}
                  <span class="trend">${icon(svg`<path d="M0 6h3l1.500-1.500L6 6l3-3 1.500 1L13 1.500l2 .5 1-2M0 12l2-1.500L4.500 12 7 10.500 8.500 13l2.500-3.500 2 3.500 3-3.500" stroke="#1478ee" stroke-width="1.500"/>`, 16, 14)}</span>
                  <span class="bars">${icon(svg`<path d="M.6 4.600h4v9.800h-4zM6.500 8.600h4v5.800h-4zM12.400.6h4v13.800h-4z" stroke="#b0b0c6" stroke-width="1.400"/>`, 17, 15)}</span>
                  <div class="sel">Sold</div>
                </div>
                ${this.trendPlot()}
              </div>
              <div class="card chart">
                <div class="head"><h2>Product</h2>${help()}</div>
                ${this.donutPlot()}
              </div>
            </div>
          </div>
        </div>
        <div class="sb">
          ${icon(svg`<path d="m0 4 3.500-4L7 4z" fill="#505050"/>`, 7, 4)}
          <div class="thumb"></div>
          ${icon(svg`<path d="m0 0 3.500 4L7 0z" fill="#505050"/>`, 7, 4)}
        </div>
        <div class="pin">${icon(svg`<path d="M6 16C3 11.500.8 8.500.8 5.800a5.200 5.200 0 0 1 10.400 0C11.200 8.500 9 11.500 6 16z" stroke="#b5b5c8" stroke-width="1.300"/><circle cx="6" cy="5.800" r="1.200" fill="#b5b5c8"/>`, 12, 17)}</div>
        <div class="menu">${menuGroups.map((g, i) => html`${i ? html`<hr />` : nothing}${g.map((t) => html`<div class="item">${t}</div>`)}`)}</div>
        <div class="fab">${icon(svg`<path d="M26 0 0 14.500l6.500 3L21 5 9.500 19v7l4-4.500 8 2.500z" fill="#fff"/>`, 26)}</div>
      </div>`;
  }
}
